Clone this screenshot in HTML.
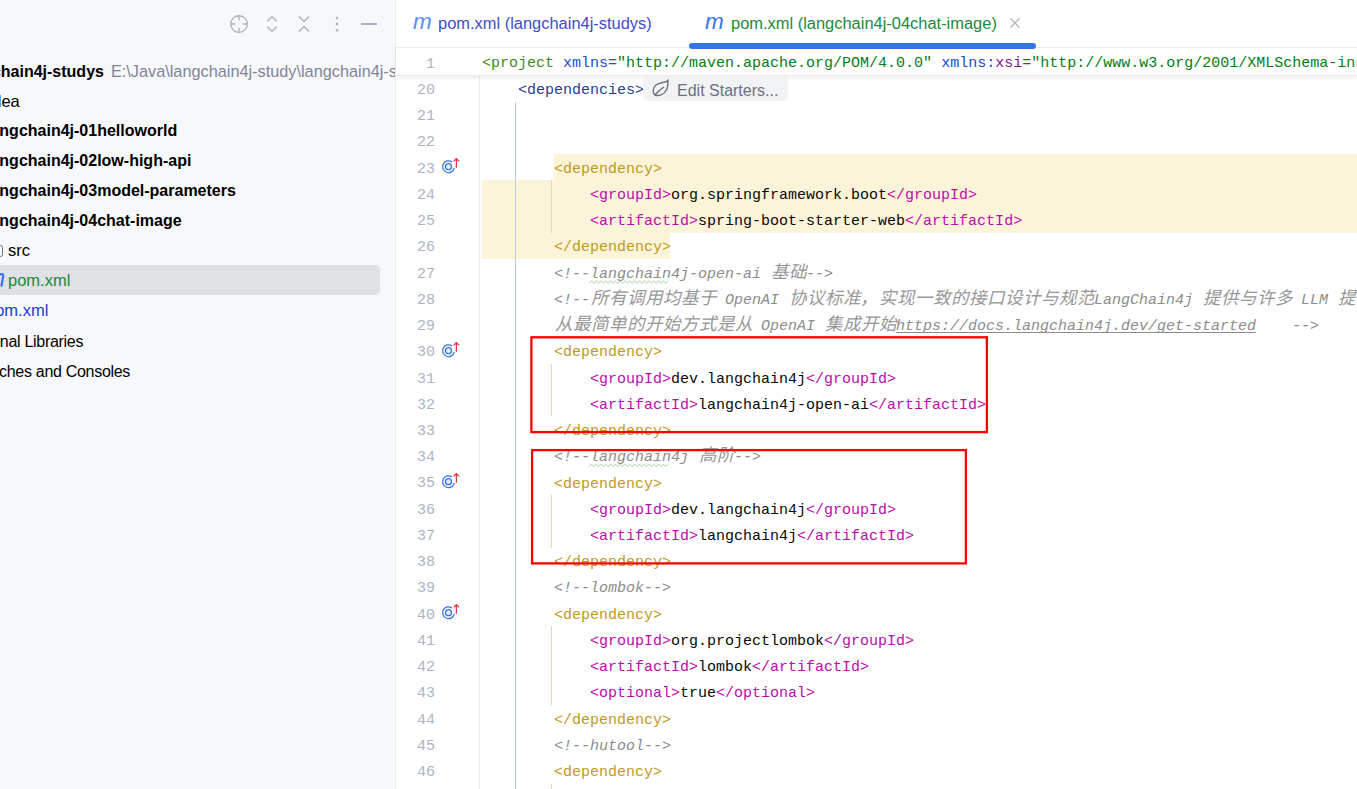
<!DOCTYPE html>
<html><head><meta charset="utf-8"><style>
*{margin:0;padding:0;box-sizing:border-box}
html,body{width:1357px;height:789px;overflow:hidden;background:#fff;font-family:"Liberation Sans",sans-serif}
#side{position:absolute;left:0;top:0;width:395px;height:789px;background:#F7F8FA;overflow:hidden}
#sideb{position:absolute;left:395px;top:0;width:1px;height:789px;background:#EBECF0}
.row{position:absolute;left:0;height:30px;white-space:nowrap;font-size:16px;line-height:30px;color:#000}
.row b{font-weight:bold}
.sel{position:absolute;left:-10px;top:265px;width:390px;height:30px;background:#DFE1E5;border-radius:5px}
#tabs{position:absolute;left:396px;top:0;width:961px;height:47px;background:#fff}
#tabb{position:absolute;left:396px;top:47px;width:961px;height:1px;background:#EBECF0}
.tab{position:absolute;top:0;height:47px;line-height:47px;font-size:16.45px;white-space:nowrap}
.mi{position:absolute;font-style:italic;font-size:22.5px;line-height:24px;top:10.3px;font-family:"Liberation Sans",sans-serif;letter-spacing:-1px}
#uline{position:absolute;left:689px;top:43px;width:347px;height:6px;background:#3574F0;border-radius:3px;z-index:5}
#editor{position:absolute;left:396px;top:48px;width:961px;height:741px;background:#fff;overflow:hidden}
.abs{position:absolute}
#code{position:absolute;left:0;top:0;width:1357px;height:789px;overflow:hidden}
.ln{position:absolute;left:482px;height:26.23px;line-height:26.23px;white-space:pre;font-family:"Liberation Mono",monospace;font-size:15px;color:#080808;padding-top:2.7px}
.num{position:absolute;left:396px;width:39px;text-align:right;height:26.23px;line-height:26.23px;font-family:"Liberation Mono",monospace;font-size:15px;color:#AEB3C2;padding-top:2.6px;white-space:pre}
.cm{color:#8C8C8C;font-style:italic}
.cm u{text-decoration:underline;text-underline-offset:2px;text-decoration-skip-ink:none}
.k{display:inline-block;width:18px;font-style:italic;color:#979797;text-align:center;font-size:17.5px;line-height:16px;font-weight:300}
.sq{text-decoration:underline wavy #7EC482;text-decoration-thickness:1px;text-underline-offset:3px}
.hl{position:absolute;background:#FCF4D8}
.g1{position:absolute;width:1px;background:#BCC8DE}
.g2{position:absolute;width:1px;background:#E3D8B2}
.gi{position:absolute;left:441px;width:20px;height:16px}
.gi svg{display:block}
#sticky{position:absolute;left:396px;top:48px;width:961px;height:28px;background:#fff;border-bottom:1px solid #EBECF0;box-shadow:0 2px 5px rgba(0,0,0,0.065)}
#gutb{position:absolute;left:479px;top:75px;width:1px;height:714px;background:#EBECF0}
.red{position:absolute;border:2.3px solid #F00}
</style></head><body lang="zh-CN">
<div id="side">
  <div class="sel"></div>
  <div class="row" style="top:56px;left:-41px"><b>langchain4j-studys</b><span style="color:#80859A;margin-left:7px;font-size:16.3px">E:\Java\langchain4j-study\langchain4j-studys</span></div>
  <div class="row" style="top:86px;left:-16px;font-size:16.5px">.idea</div>
  <div class="row" style="top:116px;left:-14px"><b>langchain4j-01helloworld</b></div>
  <div class="row" style="top:146px;left:-14px"><b>langchain4j-02low-high-api</b></div>
  <div class="row" style="top:176px;left:-14px"><b>langchain4j-03model-parameters</b></div>
  <div class="row" style="top:206px;left:-14px"><b>langchain4j-04chat-image</b></div>
  <div class="row" style="top:235.3px;left:8px;font-size:16.5px">src</div>
  <div class="row" style="top:265.3px;left:8px;color:#208A3C;font-size:16.5px">pom.xml</div>
  <div class="row" style="top:295.3px;left:-14px;color:#1A40D0;font-size:16.5px">pom.xml</div>
  <div class="row" style="top:326.5px;left:-36px;font-size:16px;letter-spacing:-0.3px">External Libraries</div>
  <div class="row" style="top:356.5px;left:-36.8px;font-size:16px;letter-spacing:-0.3px">Scratches and Consoles</div>
  <div class="abs" style="left:-3px;top:244.5px;width:6px;height:12.5px;border:1.4px solid #6C707E;border-radius:2.5px"></div>
  <svg class="abs" style="left:0;top:270px" width="6" height="20" viewBox="0 0 6 20"><path d="M-1 4.6 Q2.8 3.2 3.3 5.5 L1.4 16.6" fill="none" stroke="#3574F0" stroke-width="2.2"/></svg>
  
<svg class="abs" style="left:229px;top:13.5px" width="20" height="20" viewBox="0 0 20 20"><circle cx="10" cy="10" r="8.3" fill="none" stroke="#ADB1BD" stroke-width="1.35"/><path d="M10 1.7 V6.3 M10 13.7 V18.3 M1.7 10 H6.3 M13.7 10 H18.3" stroke="#ADB1BD" stroke-width="1.35"/></svg>
<svg class="abs" style="left:264px;top:14px" width="16" height="20" viewBox="0 0 16 20"><path d="M3.3 7.3 L8 2.7 L12.7 7.3 M3.3 12.7 L8 17.3 L12.7 12.7" fill="none" stroke="#ADB1BD" stroke-width="1.35"/></svg>
<svg class="abs" style="left:296px;top:14px" width="16" height="20" viewBox="0 0 16 20"><path d="M3 2.5 L8 7.5 L13 2.5 M3 17.5 L8 12.5 L13 17.5" fill="none" stroke="#ADB1BD" stroke-width="1.35"/></svg>
<svg class="abs" style="left:332px;top:14px" width="10" height="20" viewBox="0 0 10 20"><circle cx="5" cy="3.9" r="1.25" fill="#ADB1BD"/><circle cx="5" cy="10" r="1.25" fill="#ADB1BD"/><circle cx="5" cy="16.3" r="1.25" fill="#ADB1BD"/></svg>
<div class="abs" style="left:361px;top:23.2px;width:16px;height:1.4px;background:#ADB1BD"></div>

</div>
<div id="sideb"></div>
<div id="tabs">
  <div class="tab" style="left:42px;color:#3F4DC6">pom.xml (langchain4j-studys)</div>
  <div class="mi" style="left:17px;color:#5B8DEF">m</div>
  <div class="tab" style="left:335px;color:#208A3C">pom.xml (langchain4j-04chat-image)</div>
  <div class="mi" style="left:309px;color:#3574F0">m</div>
  <svg class="abs" style="left:614px;top:18px" width="10" height="10" viewBox="0 0 10 10"><path d="M0.5 0.5 L9.5 9.5 M9.5 0.5 L0.5 9.5" stroke="#A8ADBD" stroke-width="1.2"/></svg>
</div>
<div id="tabb"></div>
<div id="uline"></div>
<div id="code">
<div class="hl" style="left:554px;top:154.09px;width:803px;height:26.23px"></div>
<div class="hl" style="left:482px;top:180.32px;width:875px;height:52.46px"></div>
<div class="hl" style="left:482px;top:232.78px;width:188px;height:26.23px"></div>
<div class="g1" style="left:515px;top:101.63px;height:687.37px"></div>
<div class="g2" style="left:551px;top:180.32px;height:52.46px"></div>
<div class="g2" style="left:551px;top:363.93px;height:52.46px"></div>
<div class="g2" style="left:551px;top:495.08px;height:52.46px"></div>
<div class="g2" style="left:551px;top:626.23px;height:78.69px"></div>
<div class="g2" style="left:551px;top:783.61px;height:26.23px"></div>
<div class="ln" style="top:75.40px">    <span style="color:#1F3F8F">&lt;dependencies&gt;</span></div>
<div class="ln" style="top:101.63px"></div>
<div class="ln" style="top:127.86px"></div>
<div class="ln" style="top:154.09px">        <span style="color:#BE9A1E">&lt;dependency&gt;</span></div>
<div class="ln" style="top:180.32px">            <span style="color:#BC0BAE">&lt;groupId&gt;</span><span style="color:#080808">org.springframework.boot</span><span style="color:#BC0BAE">&lt;/groupId&gt;</span></div>
<div class="ln" style="top:206.55px">            <span style="color:#BC0BAE">&lt;artifactId&gt;</span><span style="color:#080808">spring-boot-starter-web</span><span style="color:#BC0BAE">&lt;/artifactId&gt;</span></div>
<div class="ln" style="top:232.78px">        <span style="color:#BE9A1E">&lt;/dependency&gt;</span></div>
<div class="ln" style="top:259.01px">        <span class="cm">&lt;!--langchain4j-open-ai <i class="k">基</i><i class="k">础</i>--&gt;</span></div>
<div class="ln" style="top:285.24px">        <span class="cm">&lt;!--<i class="k">所</i><i class="k">有</i><i class="k">调</i><i class="k">用</i><i class="k">均</i><i class="k">基</i><i class="k">于</i> OpenAI <i class="k">协</i><i class="k">议</i><i class="k">标</i><i class="k">准</i><i class="k" style="text-align:left">，</i><i class="k">实</i><i class="k">现</i><i class="k">一</i><i class="k">致</i><i class="k">的</i><i class="k">接</i><i class="k">口</i><i class="k">设</i><i class="k">计</i><i class="k">与</i><i class="k">规</i><i class="k">范</i>LangChain4j <i class="k">提</i><i class="k">供</i><i class="k">与</i><i class="k">许</i><i class="k">多</i> LLM <i class="k">提</i><i class="k">供</i></span></div>
<div class="ln" style="top:311.47px">        <span class="cm"><i class="k">从</i><i class="k">最</i><i class="k">简</i><i class="k">单</i><i class="k">的</i><i class="k">开</i><i class="k">始</i><i class="k">方</i><i class="k">式</i><i class="k">是</i><i class="k">从</i> OpenAI <i class="k">集</i><i class="k">成</i><i class="k">开</i><i class="k">始</i><u>https://docs.langchain4j.dev/get-started</u>    --&gt;</span></div>
<div class="ln" style="top:337.70px">        <span style="color:#BE9A1E">&lt;dependency&gt;</span></div>
<div class="ln" style="top:363.93px">            <span style="color:#BC0BAE">&lt;groupId&gt;</span><span style="color:#080808">dev.langchain4j</span><span style="color:#BC0BAE">&lt;/groupId&gt;</span></div>
<div class="ln" style="top:390.16px">            <span style="color:#BC0BAE">&lt;artifactId&gt;</span><span style="color:#080808">langchain4j-open-ai</span><span style="color:#BC0BAE">&lt;/artifactId&gt;</span></div>
<div class="ln" style="top:416.39px">        <span style="color:#BE9A1E">&lt;/dependency&gt;</span></div>
<div class="ln" style="top:442.62px">        <span class="cm">&lt;!--langchain4j <i class="k">高</i><i class="k">阶</i>--&gt;</span></div>
<div class="ln" style="top:468.85px">        <span style="color:#BE9A1E">&lt;dependency&gt;</span></div>
<div class="ln" style="top:495.08px">            <span style="color:#BC0BAE">&lt;groupId&gt;</span><span style="color:#080808">dev.langchain4j</span><span style="color:#BC0BAE">&lt;/groupId&gt;</span></div>
<div class="ln" style="top:521.31px">            <span style="color:#BC0BAE">&lt;artifactId&gt;</span><span style="color:#080808">langchain4j</span><span style="color:#BC0BAE">&lt;/artifactId&gt;</span></div>
<div class="ln" style="top:547.54px">        <span style="color:#BE9A1E">&lt;/dependency&gt;</span></div>
<div class="ln" style="top:573.77px">        <span class="cm">&lt;!--lombok--&gt;</span></div>
<div class="ln" style="top:600.00px">        <span style="color:#BE9A1E">&lt;dependency&gt;</span></div>
<div class="ln" style="top:626.23px">            <span style="color:#BC0BAE">&lt;groupId&gt;</span><span style="color:#080808">org.projectlombok</span><span style="color:#BC0BAE">&lt;/groupId&gt;</span></div>
<div class="ln" style="top:652.46px">            <span style="color:#BC0BAE">&lt;artifactId&gt;</span><span style="color:#080808">lombok</span><span style="color:#BC0BAE">&lt;/artifactId&gt;</span></div>
<div class="ln" style="top:678.69px">            <span style="color:#BC0BAE">&lt;optional&gt;</span><span style="color:#080808">true</span><span style="color:#BC0BAE">&lt;/optional&gt;</span></div>
<div class="ln" style="top:704.92px">        <span style="color:#BE9A1E">&lt;/dependency&gt;</span></div>
<div class="ln" style="top:731.15px">        <span class="cm">&lt;!--hutool--&gt;</span></div>
<div class="ln" style="top:757.38px">        <span style="color:#BE9A1E">&lt;dependency&gt;</span></div>
<div class="ln" style="top:783.61px"></div>
<div class="num" style="top:75.40px">20</div>
<div class="num" style="top:101.63px">21</div>
<div class="num" style="top:127.86px">22</div>
<div class="num" style="top:154.09px">23</div>
<div class="num" style="top:180.32px">24</div>
<div class="num" style="top:206.55px">25</div>
<div class="num" style="top:232.78px">26</div>
<div class="num" style="top:259.01px">27</div>
<div class="num" style="top:285.24px">28</div>
<div class="num" style="top:311.47px">29</div>
<div class="num" style="top:337.70px">30</div>
<div class="num" style="top:363.93px">31</div>
<div class="num" style="top:390.16px">32</div>
<div class="num" style="top:416.39px">33</div>
<div class="num" style="top:442.62px">34</div>
<div class="num" style="top:468.85px">35</div>
<div class="num" style="top:495.08px">36</div>
<div class="num" style="top:521.31px">37</div>
<div class="num" style="top:547.54px">38</div>
<div class="num" style="top:573.77px">39</div>
<div class="num" style="top:600.00px">40</div>
<div class="num" style="top:626.23px">41</div>
<div class="num" style="top:652.46px">42</div>
<div class="num" style="top:678.69px">43</div>
<div class="num" style="top:704.92px">44</div>
<div class="num" style="top:731.15px">45</div>
<div class="num" style="top:757.38px">46</div>
<div class="num" style="top:783.61px">47</div>
<div class="gi" style="top:158.09px"><svg width="20" height="16" viewBox="0 0 20 16"><path d="M10.88 3.87 A5.9 5.9 0 1 0 13.27 9.93" fill="none" stroke="#3574F0" stroke-width="1.3"/><circle cx="7.5" cy="8.7" r="3" fill="#EAF0FD" stroke="#3574F0" stroke-width="1.3"/><path d="M15.4 9.8 V0.9 M12.7 3.4 L15.4 0.6 L18.1 3.4" fill="none" stroke="#DB3B4B" stroke-width="1.3"/></svg></div>
<div class="gi" style="top:341.70px"><svg width="20" height="16" viewBox="0 0 20 16"><path d="M10.88 3.87 A5.9 5.9 0 1 0 13.27 9.93" fill="none" stroke="#3574F0" stroke-width="1.3"/><circle cx="7.5" cy="8.7" r="3" fill="#EAF0FD" stroke="#3574F0" stroke-width="1.3"/><path d="M15.4 9.8 V0.9 M12.7 3.4 L15.4 0.6 L18.1 3.4" fill="none" stroke="#DB3B4B" stroke-width="1.3"/></svg></div>
<div class="gi" style="top:472.85px"><svg width="20" height="16" viewBox="0 0 20 16"><path d="M10.88 3.87 A5.9 5.9 0 1 0 13.27 9.93" fill="none" stroke="#3574F0" stroke-width="1.3"/><circle cx="7.5" cy="8.7" r="3" fill="#EAF0FD" stroke="#3574F0" stroke-width="1.3"/><path d="M15.4 9.8 V0.9 M12.7 3.4 L15.4 0.6 L18.1 3.4" fill="none" stroke="#DB3B4B" stroke-width="1.3"/></svg></div>
<div class="gi" style="top:604.00px"><svg width="20" height="16" viewBox="0 0 20 16"><path d="M10.88 3.87 A5.9 5.9 0 1 0 13.27 9.93" fill="none" stroke="#3574F0" stroke-width="1.3"/><circle cx="7.5" cy="8.7" r="3" fill="#EAF0FD" stroke="#3574F0" stroke-width="1.3"/><path d="M15.4 9.8 V0.9 M12.7 3.4 L15.4 0.6 L18.1 3.4" fill="none" stroke="#DB3B4B" stroke-width="1.3"/></svg></div>
</div>
<div id="gutb"></div>
<div id="sticky"></div>
<div class="ln" style="top:49.8px;height:27px;line-height:27px;padding-top:0"><span style="color:#3C8C2A">&lt;project</span> <span style="color:#174AD4">xmlns</span><span style="color:#067D17">="http://maven.apache.org/POM/4.0.0"</span> <span style="color:#174AD4">xmlns:</span><span style="color:#871094">xsi</span><span style="color:#067D17">="http://www.w3.org/2001/XMLSchema-instance"</span></div>
<div class="num" style="top:50.7px;height:27px;line-height:27px;padding-top:0">1</div>
<div class="abs" style="left:643px;top:76.5px;width:145px;height:24.5px;background:#F2F3F5;border-radius:5px"></div>
<svg class="abs" style="left:651px;top:79px" width="20" height="18" viewBox="0 0 20 18"><path d="M17 1.5 C 15 4, 9 3, 5 6 C 1.5 9, 1.5 14, 4 16 C 7 17.5, 13 16, 15.5 11 C 17 8, 17 4, 17 1.5 Z M4 16 C 7 12, 10 10, 13 8" fill="none" stroke="#6C707E" stroke-width="1.4"/></svg>
<div class="abs" style="left:677px;top:77.8px;height:25px;line-height:25px;font-size:16px;color:#6C707E;white-space:nowrap">Edit Starters...</div>
<svg class="abs" style="left:0;top:0" width="1357" height="789"><polyline points="589.0,283.2 591.4,280.8 593.8,283.2 596.2,280.8 598.6,283.2 601.0,280.8 603.4,283.2 605.8,280.8 608.2,283.2 610.6,280.8 613.0,283.2 615.4,280.8 617.8,283.2 620.2,280.8 622.6,283.2 625.0,280.8 627.4,283.2 629.8,280.8 632.2,283.2 634.6,280.8 637.0,283.2 639.4,280.8 641.8,283.2 644.2,280.8 646.6,283.2 649.0,280.8 651.4,283.2 653.8,280.8 656.2,283.2 658.6,280.8 661.0,283.2 663.4,280.8 665.8,283.2 668.2,280.8" fill="none" stroke="#A6D6A8" stroke-width="1"/><polyline points="589.0,466.6 591.4,464.2 593.8,466.6 596.2,464.2 598.6,466.6 601.0,464.2 603.4,466.6 605.8,464.2 608.2,466.6 610.6,464.2 613.0,466.6 615.4,464.2 617.8,466.6 620.2,464.2 622.6,466.6 625.0,464.2 627.4,466.6 629.8,464.2 632.2,466.6 634.6,464.2 637.0,466.6 639.4,464.2 641.8,466.6 644.2,464.2 646.6,466.6 649.0,464.2 651.4,466.6 653.8,464.2 656.2,466.6 658.6,464.2 661.0,466.6 663.4,464.2 665.8,466.6 668.2,464.2" fill="none" stroke="#9FD0A0" stroke-width="1"/></svg>
<svg class="abs" style="left:0;top:0" width="1357" height="789"><rect x="531.4" y="337.3" width="455.5" height="94.8" fill="none" stroke="#F00" stroke-width="2.3"/><rect x="532.1" y="450.1" width="433.8" height="113.3" fill="none" stroke="#F00" stroke-width="2.3"/></svg>

</body></html>
